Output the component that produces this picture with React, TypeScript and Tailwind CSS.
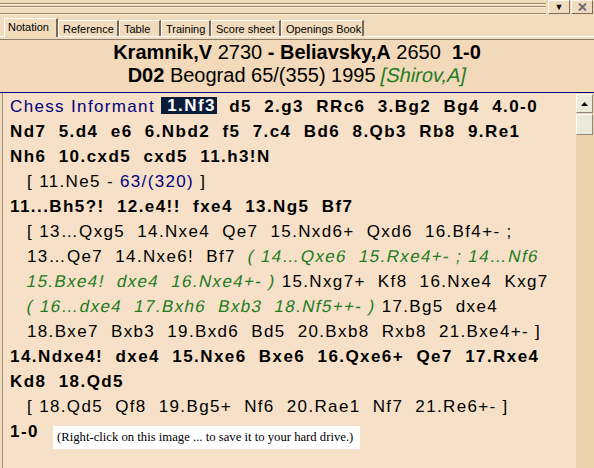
import React from 'react';

const tabs = [
  { label: 'Notation', w: 'w-[54px]', active: true },
  { label: 'Reference', w: 'w-[61px]' },
  { label: 'Table', w: 'w-[42px]' },
  { label: 'Training', w: 'w-[50px]' },
  { label: 'Score sheet', w: 'w-[70px]' },
  { label: 'Openings Book', w: 'w-[83px]' },
];

function Line({ children, bold, indent }: { children: React.ReactNode; bold?: boolean; indent?: boolean }) {
  return (
    <div
      className={`h-[25px] leading-[25px] whitespace-pre ${bold ? 'font-bold tracking-[1.43px]' : ''} ${indent ? 'pl-[24px]' : 'pl-[7px]'}`}
    >
      {children}
    </div>
  );
}

// slanted green commentary
function G({ children }: { children: React.ReactNode }) {
  return <span className="inline-block -skew-x-12 text-[#237b23]">{children}</span>;
}

export default function App() {
  return (
    <div className="relative w-[594px] h-[468px] overflow-hidden bg-[#f1dbbd] font-['Liberation_Sans',Arial,sans-serif] text-black">
      {/* title grip strip */}
      <div className="flex h-[15px]">
        <div className="flex-1 flex flex-col">
          <div className="h-[3px]" />
          <div className="h-[1px] bg-[#a3865f]" />
          <div className="h-[1px] bg-[#fbeedd]" />
          <div className="h-[1px]" />
          <div className="h-[1px] bg-[#a3865f]" />
          <div className="h-[1px] bg-[#fbeedd]" />
          <div className="h-[5px]" />
          <div className="h-[1px] bg-[#a3865f]" />
          <div className="h-[1px] bg-[#fbeedd]" />
        </div>
        <div className="w-[2px]" />
        <div className="w-[22px] h-[14px] bg-[#f0dcc0] border-t border-l border-[#fff8ec] border-r border-b border-r-[#7c6c58] border-b-[#7c6c58] flex items-center justify-center text-[9px] leading-none">
          ▼
        </div>
        <div className="w-[1px]" />
        <div className="w-[22px] h-[14px] bg-[#f0dcc0] border-t border-l border-[#fff8ec] border-r border-b border-r-[#7c6c58] border-b-[#7c6c58] flex items-center justify-center">
          <svg width="9" height="8" viewBox="0 0 9 8">
            <path d="M1 0.5 L8 7.5 M8 0.5 L1 7.5" stroke="#6e6e6e" strokeWidth="2" />
          </svg>
        </div>
        <div className="w-[1px]" />
      </div>

      {/* tabs */}
      <div className="flex items-end h-[21px] pl-[4px]">
        {tabs.map((t) =>
          t.active ? (
            <div
              key={t.label}
              className={`${t.w} h-[19px] mb-[-1px] relative z-10 bg-[#f2dcbc] border-t border-l border-white border-r-2 border-r-[#77685a] rounded-tl-[2px] pl-[3px] text-[11px] leading-[16px]`}
            >
              {t.label}
            </div>
          ) : (
            <div
              key={t.label}
              className={`${t.w} h-[16px] bg-[#f1dbbd] border-t border-l border-white border-r-2 border-r-[#77685a] rounded-tl-[2px] pl-[4px] text-[11px] leading-[16px]`}
            >
              {t.label}
            </div>
          ),
        )}
      </div>
      <div className="h-[1px] bg-white" />
      <div className="h-[2px]" />
      <div className="h-[1px] bg-[#8d7d6b]" />

      {/* game header */}
      <div className="h-[52px] bg-[#f2d9b9] pt-[1px] text-center text-[20px] leading-[23px] whitespace-pre">
        <div>
          <b>Kramnik,V</b> 2730 <b>- Beliavsky,A</b> 2650  <b>1-0</b>
        </div>
        <div>
          <b>D02</b> Beograd 65/(355) 1995 <span className="inline-block -skew-x-12 text-[#237b23]">[Shirov,A]</span>
        </div>
      </div>
      <div className="h-[1px] bg-[#000080]" />

      {/* notation body */}
      <div className="flex h-[376px]">
        <div className="flex-1 pl-[2px]">
          <div className="h-full border-l border-[#9c8c78] bg-[#f6e1c8] pt-[1px] text-[17px] tracking-[1.35px]">
            <Line bold>
              <span className="font-normal tracking-[1.35px] text-[#000080]">Chess Informant</span>{' '}
              <span className="inline-block leading-[17px] bg-[#0b1b38] text-white pl-[6px] pr-[1px] relative top-[-1px]">1.Nf3</span>
              {'  d5  2.g3  RRc6  3.Bg2  Bg4  4.0-0'}
            </Line>
            <Line bold>{'Nd7  5.d4  e6  6.Nbd2  f5  7.c4  Bd6  8.Qb3  Rb8  9.Re1'}</Line>
            <Line bold>{'Nh6  10.cxd5  cxd5  11.h3!N'}</Line>
            <Line indent>
              {'[ 11.Ne5 - '}
              <span className="text-[#000080]">63/(320)</span>
              {' ]'}
            </Line>
            <Line bold>{'11...Bh5?!  12.e4!!  fxe4  13.Ng5  Bf7'}</Line>
            <Line indent>{'[ 13…Qxg5  14.Nxe4  Qe7  15.Nxd6+  Qxd6  16.Bf4+- ;'}</Line>
            <Line indent>
              {'13…Qe7  14.Nxe6!  Bf7  '}
              <G>{'( 14…Qxe6  15.Rxe4+- ; 14…Nf6'}</G>
            </Line>
            <Line indent>
              <G>{'15.Bxe4!  dxe4  16.Nxe4+- )'}</G>
              {' 15.Nxg7+  Kf8  16.Nxe4  Kxg7'}
            </Line>
            <Line indent>
              <G>{'( 16…dxe4  17.Bxh6  Bxb3  18.Nf5++- )'}</G>
              {' 17.Bg5  dxe4'}
            </Line>
            <Line indent>{'18.Bxe7  Bxb3  19.Bxd6  Bd5  20.Bxb8  Rxb8  21.Bxe4+- ]'}</Line>
            <Line bold>{'14.Ndxe4!  dxe4  15.Nxe6  Bxe6  16.Qxe6+  Qe7  17.Rxe4'}</Line>
            <Line bold>{'Kd8  18.Qd5'}</Line>
            <Line indent>{'[ 18.Qd5  Qf8  19.Bg5+  Nf6  20.Rae1  Nf7  21.Re6+- ]'}</Line>
            <Line bold>{'1-0'}</Line>
          </div>
        </div>

        {/* scrollbar */}
        <div className="w-[18px] bg-[#edd2ad] pt-[1px]">
          <div className="w-[17px] h-[19px] bg-[#ecead9] border-t border-l border-white border-r border-b border-r-[#8a8a80] border-b-[#8a8a80] flex items-center justify-center">
            <svg width="7" height="4" viewBox="0 0 7 4">
              <path d="M3.5 0 L7 4 L0 4 Z" fill="#000" />
            </svg>
          </div>
          <div className="w-[17px] h-[21px] mt-[1px] bg-[#ecead9] border-t border-l border-white border-r border-b border-r-[#8a8a80] border-b-[#8a8a80]" />
        </div>
      </div>

      {/* caption overlay */}
      <div className="absolute left-[53px] top-[426px] w-[307px] h-[23px] bg-white pl-[4px] font-['Liberation_Serif','Times_New_Roman',serif] text-[12.7px] leading-[22px] whitespace-pre">
        (Right-click on this image ... to save it to your hard drive.)
      </div>
    </div>
  );
}
